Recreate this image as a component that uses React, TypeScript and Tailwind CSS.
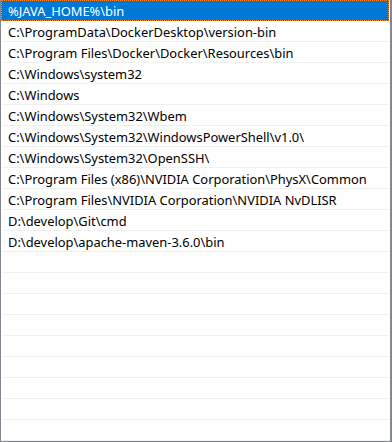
// Environment variable path list (Windows listview style)
const PATHS = [
  "%JAVA_HOME%\\bin",
  "C:\\ProgramData\\DockerDesktop\\version-bin",
  "C:\\Program Files\\Docker\\Docker\\Resources\\bin",
  "C:\\Windows\\system32",
  "C:\\Windows",
  "C:\\Windows\\System32\\Wbem",
  "C:\\Windows\\System32\\WindowsPowerShell\\v1.0\\",
  "C:\\Windows\\System32\\OpenSSH\\",
  "C:\\Program Files (x86)\\NVIDIA Corporation\\PhysX\\Common",
  "C:\\Program Files\\NVIDIA Corporation\\NVIDIA NvDLISR",
  "D:\\develop\\Git\\cmd",
  "D:\\develop\\apache-maven-3.6.0\\bin",
];

const EMPTY_ROWS = 9;

export default function App() {
  return (
    <div className="h-[442px] w-[392px] bg-white">
      <div
        className="flex h-full flex-col overflow-hidden border-r-2 border-b border-l border-[#828790] bg-white text-[12.9px] text-black"
        style={{ fontFamily: '"Noto Sans", "Liberation Sans", sans-serif' }}
      >
        {PATHS.map((p, i) => (
          <div
            key={p}
            className={
              i === 0
                ? "mr-[1px] flex h-[21px] shrink-0 items-center border border-dotted border-[#ff8728] bg-[#0078d7] pt-[2px] pl-[6px] text-white"
                : "mx-[1px] flex h-[21px] shrink-0 items-center border-b border-[#f0f0f0] pt-[2px] pl-[6px]"
            }
          >
            <span className="whitespace-nowrap leading-none">{p}</span>
          </div>
        ))}
        {Array.from({ length: EMPTY_ROWS }).map((_, i) => (
          <div key={i} className="mx-[1px] h-[21px] shrink-0 border-b border-[#f0f0f0]" />
        ))}
      </div>
    </div>
  );
}
